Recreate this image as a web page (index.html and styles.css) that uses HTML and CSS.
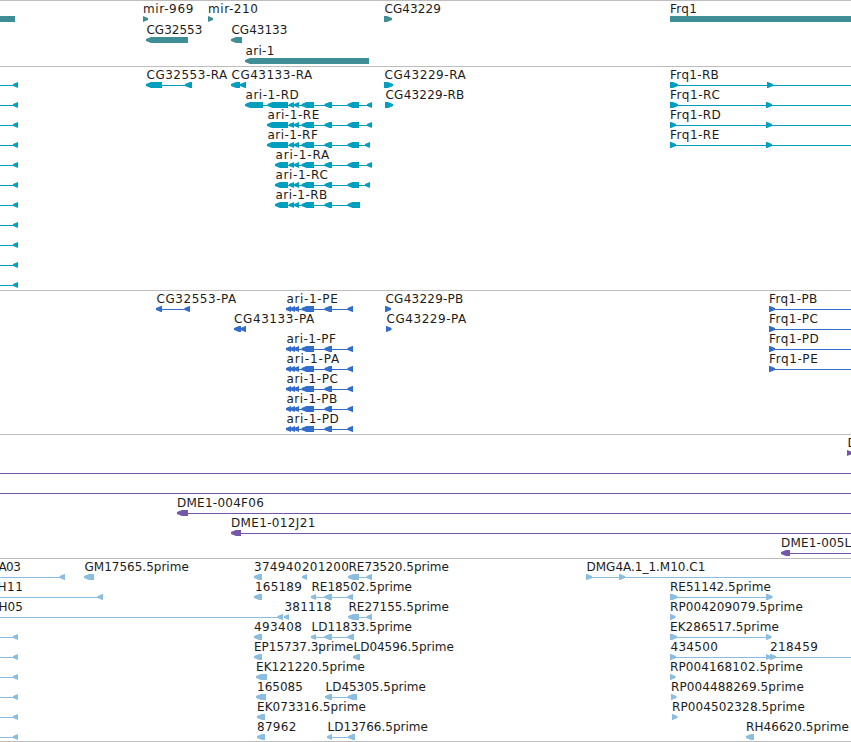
FILE: index.html
```html
<!DOCTYPE html>
<html lang="en">
<head>
<meta charset="utf-8">
<title>Genome tracks</title>
<link rel="stylesheet" href="styles.css">
</head>
<body>
<main class="browser">
<svg class="track genes" id="genes"></svg>
<svg class="track transcripts" id="transcripts"></svg>
<svg class="track proteins" id="proteins"></svg>
<svg class="track clones" id="clones"></svg>
<svg class="track ests" id="ests"></svg>
</main>
<script src="tracks.js"></script>
</body>
</html>
```
FILE: styles.css
```css
body {
  margin: 0;
  background: #fff;
}
.browser {
  display: flex;
  flex-direction: column;
  width: 851px;
  height: 741px;
  border-bottom: 1px solid #bdbdbd;
  overflow: hidden;
}
.track {
  display: block;
  box-sizing: border-box;
  flex: none;
  width: 851px;
  border-top: 1px solid #bdbdbd;
}
.genes { height: 66px; color: #3f8e95; }
.transcripts { height: 224px; color: #009fc0; }
.proteins { height: 144px; color: #326dcc; }
.clones { height: 124px; color: #7457a9; }
.ests { height: 183px; color: #8abddf; }
.track rect,
.track polygon { fill: currentColor; }
.track text {
  fill: #1c1c1c;
  font: 12px "DejaVu Sans", sans-serif;
}
```
FILE: tracks.js
```js
// Feature: [row, line "from-to" or "", blocks, label, label start, label end]
// Block: L = arrow pointing left, R = arrow pointing right, B = plain bar
const tail = "289-294 L294-299 L301.5-314 L324.5-332";
const peptide = "L286-291 L290-295 L294-299 L301.5-314 L324.5-332 L347.5-353";
const tracks = {
  genes: { pitch: 21, items: [
    [0, "", "B0-15"],
    [0, "", "R143-148", "mir-969", 143.5, 193],
    [0, "", "R208-213", "mir-210", 208.5, 257.5],
    [0, "", "R384-392", "CG43229", 385, 440.5],
    [0, "", "B670-851", "Frq1", 670.5, 696.5],
    [1, "", "L146-188", "CG32553", 147, 202],
    [1, "", "L231-242", "CG43133", 232, 287],
    [2, "", "L245-369", "ari-1", 246, 274]
  ] },
  transcripts: { pitch: 20, items: [
    [0, "146-192", "L146-162 L185-192", "CG32553-RA", 147, 227],
    [0, "", "L231-240 L240-246", "CG43133-RA", 232, 312],
    [0, "", "R384-393", "CG43229-RA", 385, 465.5],
    [0, "670-851", "R670-678 R767-773", "Frq1-RB", 670.5, 718.5],
    [1, "245-372", "L245-263 L267.5-288 L" + tail + " L347.5-359 L367-372", "ari-1-RD", 246, 298.5],
    [1, "", "R385-393", "CG43229-RB", 386, 464],
    [1, "670-851", "R670-678 R766-772", "Frq1-RC", 670.5, 719.5],
    [2, "267-372", "L267-288 L" + tail + " L347.5-359 L367-372", "ari-1-RE", 268, 319],
    [2, "670-851", "R670-676 R766-772", "Frq1-RD", 670.5, 720.5],
    [3, "267-370", "L267-288 L" + tail + " L347.5-359 L365-370", "ari-1-RF", 268, 317.5],
    [3, "670-851", "R670-676 R766-772", "Frq1-RE", 670.5, 719],
    [4, "275-372", "L275-288 L" + tail + " L347.5-359 L367-372", "ari-1-RA", 276, 329],
    [5, "275-370", "L275-288 L" + tail + " L347.5-359 L365-370", "ari-1-RC", 276, 327.5],
    [6, "275-360", "L275-288 L" + tail + " L347.5-360", "ari-1-RB", 276, 327],
    ...[0, 1, 2, 3, 4, 5, 6, 7, 8, 9, 10].map(r => [r, "0-18", "L13-18"])
  ] },
  proteins: { pitch: 20, items: [
    [0, "156-190", "L156-162 L184.5-190", "CG32553-PA", 157, 236],
    [0, "286-353", peptide, "ari-1-PE", 287, 337.5],
    [0, "", "R385-391", "CG43229-PB", 386, 463],
    [1, "", "L234-241 L240.5-246", "CG43133-PA", 234.5, 314],
    [1, "", "R386-391.5", "CG43229-PA", 387, 466],
    [2, "286-353", peptide, "ari-1-PF", 287, 335.5],
    [3, "286-353", peptide, "ari-1-PA", 287, 339],
    [4, "286-353", peptide, "ari-1-PC", 287, 337.5],
    [5, "286-353", peptide, "ari-1-PB", 287, 337],
    [6, "286-353", peptide, "ari-1-PD", 287, 338.5],
    [0, "769-851", "R769-775", "Frq1-PB", 769.5, 817],
    [1, "769-851", "R769-775", "Frq1-PC", 769.5, 817.5],
    [2, "769-851", "R769-775", "Frq1-PD", 769.5, 818.5],
    [3, "769-851", "R769-775", "Frq1-PE", 769.5, 817.5]
  ] },
  clones: { pitch: 20, items: [
    [0, "", "R847-852", "D", 848, 856],
    [1, "0-851", ""],
    [2, "0-851", ""],
    [3, "177-851", "L177-188", "DME1-004F06", 177.5, 263.5],
    [4, "231-851", "L231-241", "DME1-012J21", 231.5, 315],
    [5, "781-851", "L781-790", "DME1-005L", 781.5, 851]
  ] },
  ests: { pitch: 20, items: [
    [0, "0-65", "L59.5-65", "A03", -1, 20.5],
    [0, "", "L84-94", "GM17565.5prime", 85, 188.5],
    [0, "", "L254-262", "374940", 254.5, 301],
    [0, "", "L302-307", "201200", 302.5, 348.5],
    [0, "348-372", "L348-359 L366.5-372", "RE73520.5prime", 349, 448.5],
    [0, "586-851", "R586-592 R619-625", "DMG4A.1_1.M10.C1", 587, 705],
    [1, "0-103", "L97.5-103", "H11", -2, 22.5],
    [1, "", "L254-262", "165189", 255.5, 301.5],
    [1, "311-353", "L311-316 L324.5-332 L347.5-353", "RE18502.5prime", 312, 411.5],
    [1, "670-772", "R670-677.5 R766-772.5", "RE51142.5prime", 670.5, 770.5],
    [2, "0-283", "L277.5-283 L284-289", "H05", -1, 22.5],
    [2, "", "", "381118", 285, 331],
    [2, "348-372", "L348-359 L366.5-372", "RE27155.5prime", 349, 448.5],
    [2, "", "R670-675.5", "RP004209079.5prime", 670.5, 802.5],
    [3, "", "L254-262", "493408", 254.5, 301.5],
    [3, "311-354", "L311-316 L324.5-332 L347.5-354", "LD11833.5prime", 312, 411.5],
    [3, "670-771", "R670-677 R766-771.5", "EK286517.5prime", 670.5, 778.5],
    [4, "", "L254-262", "EP15737.3prime", 254.5, 353],
    [4, "", "L353-360", "LD04596.5prime", 354, 453.5],
    [4, "670-851", "R670-676 R766-771 R770-776", "434500", 671, 717.5],
    [4, "", "", "218459", 770.5, 817.5],
    [5, "", "L256-267", "EK121220.5prime", 256.5, 364.5],
    [5, "", "R670-675.5", "RP004168102.5prime", 670.5, 802.5],
    [6, "", "L256-266", "165085", 257.5, 302.5],
    [6, "325-357", "L325-332 L347.5-357", "LD45305.5prime", 326, 425.5],
    [6, "", "R671-676.5", "RP004488269.5prime", 671.5, 803.5],
    [7, "", "L257-265", "EK073316.5prime", 257.5, 365.5],
    [7, "", "R672-677.5", "RP004502328.5prime", 672.5, 804.5],
    [8, "", "L257-265", "87962", 257.5, 296],
    [8, "327-355", "L327-332 L348-355", "LD13766.5prime", 328, 427.5],
    [8, "", "L746-754", "RH46620.5prime", 746.5, 848.5],
    ...[3, 4, 5, 6, 7, 8].map(r => [r, "0-18", "L13-18"])
  ] }
};

function block(code, y) {
  const [a, b] = code.slice(1).split("-").map(Number);
  if (code[0] === "B") return `<rect x="${a}" y="${y}" width="${b - a}" height="6"/>`;
  const head = Math.min(5, b - a);
  const [tip, back, side] = code[0] === "L" ? [a, b, a + head] : [b, a, b - head];
  return `<polygon points="${tip},${y + 2} ${side},${y} ${back},${y} ${back},${y + 6} ${side},${y + 6} ${tip},${y + 4}"/>`;
}

for (const [id, track] of Object.entries(tracks)) {
  let out = "";
  for (const [row, line, blocks, label, from, to] of track.items) {
    const y = row * track.pitch;
    if (line) {
      const [a, b] = line.split("-").map(Number);
      out += `<rect x="${a}" y="${y + 18}" width="${b - a}" height="1"/>`;
    }
    for (const code of blocks.split(" ").filter(Boolean)) out += block(code, y + 15);
    if (label) out += `<text x="${from - 0.5}" y="${y + 12}" textLength="${to - from + 0.8}">${label}</text>`;
  }
  document.getElementById(id).innerHTML = out;
}
```
